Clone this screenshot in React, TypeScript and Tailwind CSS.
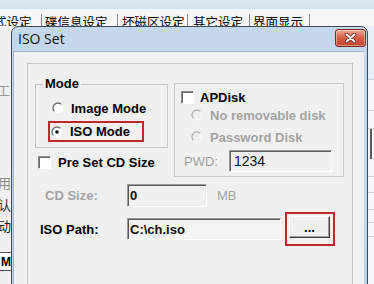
import React from "react";

function Radio({ checked, disabled }: { checked?: boolean; disabled?: boolean }) {
  return (
    <svg width="12" height="12" viewBox="0 0 12 12" className="shrink-0">
      <circle cx="6" cy="6" r="5" fill={disabled ? "#f0f0f0" : "#ffffff"} />
      <path
        d="M9.54 2.46 A5 5 0 0 0 2.46 9.54"
        fill="none"
        stroke={disabled ? "#b4b4b4" : "#6e6e6e"}
        strokeWidth="1.3"
      />
      <path d="M9.54 2.46 A5 5 0 0 1 2.46 9.54" fill="none" stroke="#ffffff" strokeWidth="1" />
      {checked && <circle cx="6" cy="6" r="1.8" fill="#111111" />}
    </svg>
  );
}

function Check() {
  return (
    <div className="w-[13px] h-[13px] shrink-0 bg-white border border-t-[#8a8a8a] border-l-[#8a8a8a] border-b-white border-r-white shadow-[inset_1px_1px_0_#6a6a6a]" />
  );
}

function Field({
  value,
  className,
  bold,
  disabled,
}: {
  value: string;
  className: string;
  bold?: boolean;
  disabled?: boolean;
}) {
  return (
    <div
      className={`${className} flex items-center pl-[2px] border border-t-[#9a9a9a] border-l-[#9a9a9a] border-b-white border-r-white shadow-[inset_1px_1px_0_#5a5a5a] ${
        disabled ? "bg-[#f0f0f0]" : "bg-[#f4f4f4]"
      } ${bold ? "font-bold text-[13px]" : "text-[14px]"} text-[#111] leading-none`}
    >
      {value}
    </div>
  );
}

function Btn({ label, className }: { label: string; className: string }) {
  return (
    <div
      className={`${className} flex items-center justify-center bg-[#f0f0f0] border border-t-white border-l-white border-b-[#404040] border-r-[#404040] shadow-[inset_-1px_-1px_0_#9a9a9a] font-bold text-[13px] leading-none text-black`}
    >
      {label}
    </div>
  );
}

export default function App() {
  return (
    <div className="relative w-[374px] h-[284px] overflow-hidden bg-[#f0f0f0] font-['Liberation_Sans',Arial,sans-serif]">
      {/* window behind the dialog */}
      <div className="flex flex-col h-full">
        <div className="h-[9px] bg-gradient-to-b from-[#dfe8f2] to-[#d4e0ed]" />
        <div className="h-[17px] overflow-hidden bg-[#f6f6f6] flex whitespace-nowrap font-['Noto_Sans_CJK_SC',sans-serif] text-[12.5px] leading-[13px] text-black">
          <div className="-ml-[6px] w-[48px] shrink-0 mt-[5px] h-[12px] pt-[1px] border-r border-[#8c8c8c]">式设定</div>
          <div className="w-[76px] shrink-0 mt-[5px] h-[12px] pt-[1px] pl-[3px] border-r border-[#8c8c8c]">碟信息设定</div>
          <div className="w-[70px] shrink-0 mt-[5px] h-[12px] pt-[1px] pl-[4px] border-r border-[#8c8c8c]">坏磁区设定</div>
          <div className="w-[62px] shrink-0 mt-[5px] h-[12px] pt-[1px] pl-[5px] border-r border-[#8c8c8c]">其它设定</div>
          <div className="w-[60px] shrink-0 mt-[5px] h-[12px] pt-[1px] pl-[3px] border-r border-[#8c8c8c]">界面显示</div>
        </div>
        <div className="flex-1 flex justify-between">
          <div className="w-[11px] overflow-hidden flex flex-col font-['Noto_Sans_CJK_SC',sans-serif] text-[13px] leading-[14px]">
            <div className="mt-[57px] -ml-[3px] text-[#9a9a9a]">工</div>
            <div className="mt-[79px] -ml-[2px] text-[#8a8a8a]">用</div>
            <div className="mt-[8px] -ml-[2px] text-[#333]">认</div>
            <div className="mt-[7px] -ml-[2px] text-[#222]">动</div>
            <div className="mt-[19px] h-[19px] border-y border-[#555] bg-white flex items-center justify-end font-['Liberation_Sans',sans-serif] font-bold text-[12px] text-black">
              M
            </div>
          </div>
          <div className="w-[7px] flex flex-col bg-[#f7f8fa]">
            <div className="h-[54px] border-b border-[#c9d3de] bg-[#e9eff6]" />
            <div className="h-[31px] border-b border-[#cfcfcf]" />
            <div className="h-[18px] border-b border-[#cfcfcf]" />
            <div className="h-[30px] border-l-[2px] border-[#5a5a5a] ml-[3px]" />
            <div className="h-[18px] border-b border-[#cfcfcf]" />
            <div className="h-[16px] border-b border-[#cfcfcf]" />
            <div className="h-[17px] border-b border-[#cfcfcf]" />
            <div className="h-[13px] border-b border-[#cfcfcf]" />
            <div className="h-[14px] border-b border-[#cfcfcf]" />
          </div>
        </div>
      </div>

      {/* ISO Set dialog */}
      <div className="absolute left-[11px] top-[26px] w-[357px] h-[280px] flex flex-col rounded-t-[7px] border border-[#3e4b5a] bg-gradient-to-b from-[#c4d7ec] to-[#bdd2ea] pl-[1px] pr-[3px]">
        <div className="h-[24px] shrink-0 flex items-start justify-between pl-[5px]">
          <span className="mt-[2px] font-['Open_Sans',sans-serif] text-[14px] leading-[20px] text-[#151515]">ISO Set</span>
          <div className="mt-[2px] -mr-[2px] w-[31px] h-[18px] rounded-[3px] border border-[#7a2c22] bg-gradient-to-b from-[#eda897] via-[#d65e45] to-[#c6452f] shadow-[inset_0_0_0_1px_rgba(255,255,255,0.4)] flex items-center justify-center">
            <svg width="13" height="10" viewBox="0 0 13 10">
              <path d="M2.5 1.5 L10.5 8.5 M10.5 1.5 L2.5 8.5" stroke="#6a2418" strokeWidth="3.6" strokeLinecap="round" />
              <path d="M2.5 1.5 L10.5 8.5 M10.5 1.5 L2.5 8.5" stroke="#ffffff" strokeWidth="2" strokeLinecap="round" />
            </svg>
          </div>
        </div>
        <div className="flex-1 bg-[#f0f0f0] border-t border-l border-[#a6b6c8] pl-[13px] pt-[11px]">
          <div className="w-[326px] h-[240px] border border-[#c6c6c6] pl-[7px] pt-[13px] flex flex-col text-[13px] leading-none">
            <div className="flex items-start gap-[6px]">
              <div className="w-[133px] flex flex-col">
                <fieldset className="m-0 p-0 border border-[#c8c8c8] w-[133px]">
                  <legend className="ml-[7px] px-[2px] font-bold text-[13px] leading-[14px] text-black">Mode</legend>
                  <div className="pl-[12px] pt-[9px] pb-[5px] flex flex-col">
                    <div className="h-[16px] pl-[4px] flex items-center gap-[7px] font-bold text-black">
                      <Radio />
                      <span>Image Mode</span>
                    </div>
                    <div className="mt-[5px] w-[96px] h-[21px] border-2 border-[#c0272d] pl-[1px] flex items-center gap-[7px] font-bold text-black">
                      <Radio checked />
                      <span>ISO Mode</span>
                    </div>
                  </div>
                </fieldset>
                <div className="mt-[8px] ml-[3px] flex items-center gap-[7px] font-bold text-black">
                  <Check />
                  <span>Pre Set CD Size</span>
                </div>
              </div>

              <div className="mt-[6px] w-[170px] h-[94px] border border-[#c8c8c8] pl-[6px] pt-[7px] flex flex-col">
                <div className="h-[13px] flex items-center gap-[6px] font-bold text-black">
                  <Check />
                  <span>APDisk</span>
                </div>
                <div className="mt-[3px] h-[16px] ml-[10px] flex items-center gap-[7px] font-bold text-[#a3a3a3]">
                  <Radio disabled />
                  <span>No removable disk</span>
                </div>
                <div className="mt-[6px] h-[16px] ml-[10px] flex items-center gap-[7px] font-bold text-[#a3a3a3]">
                  <Radio disabled />
                  <span>Password Disk</span>
                </div>
                <div className="mt-[5px] ml-[3px] flex items-center">
                  <span className="w-[45px] text-[13px] text-[#a0a0a0]">PWD:</span>
                  <Field value="1234" className="w-[103px] h-[22px] pl-[4px]" disabled />
                </div>
              </div>
            </div>

            <div className="mt-[7px] flex items-center">
              <span className="ml-[10px] w-[82px] font-bold text-[#a3a3a3]">CD Size:</span>
              <Field value="0" className="w-[80px] h-[23px]" bold disabled />
              <span className="ml-[10px] text-[#a3a3a3]">MB</span>
            </div>

            <div className="mt-[5px] flex items-center">
              <span className="ml-[5px] w-[87px] font-bold text-black">ISO Path:</span>
              <Field value="C:\ch.iso" className="w-[154px] h-[22px]" bold />
              <div className="ml-[4px] w-[50px] h-[34px] border-2 border-[#c0272d] pl-[2px] pt-[2px]">
                <Btn label="..." className="w-[41px] h-[22px]" />
              </div>
            </div>

            <div className="mt-[38px] flex">
              <Btn label="OK" className="ml-[48px] w-[55px] h-[23px]" />
              <Btn label="Cancel" className="ml-[80px] w-[57px] h-[23px]" />
            </div>
          </div>
        </div>
      </div>
    </div>
  );
}
